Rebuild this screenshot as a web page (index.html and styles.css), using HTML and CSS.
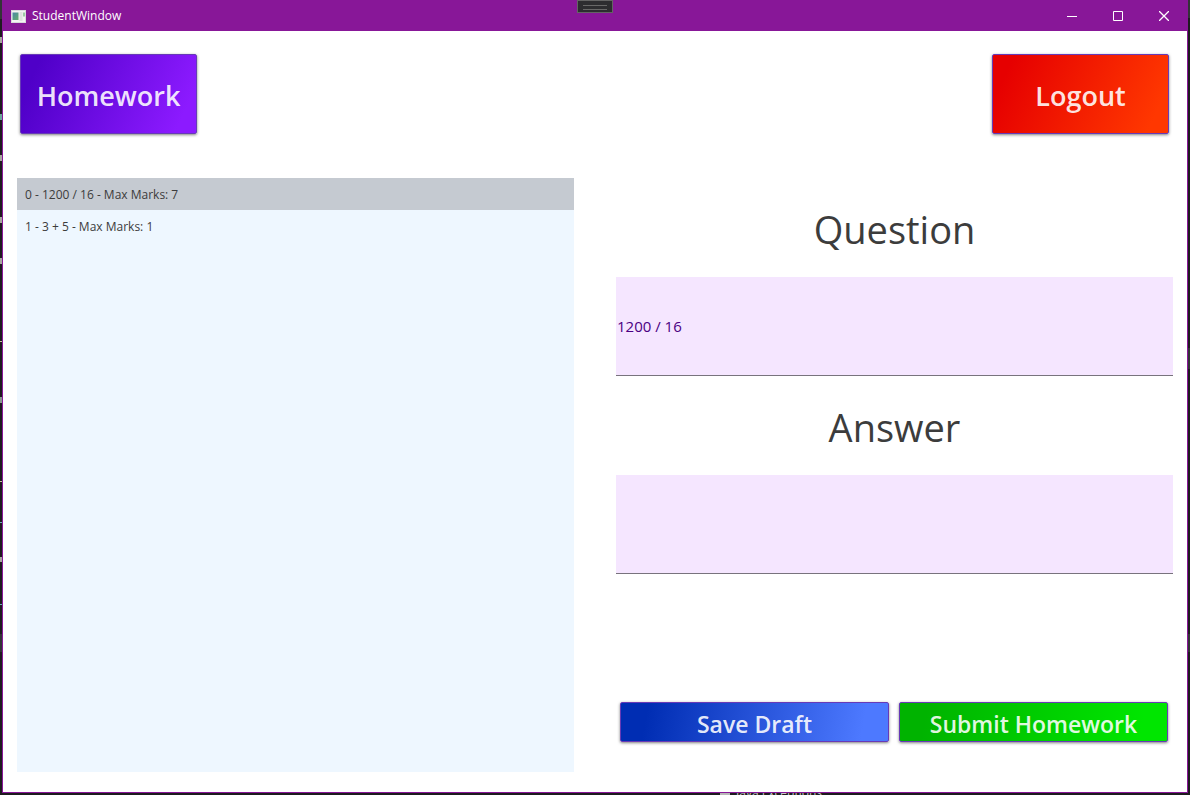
FILE: index.html
```html
<!DOCTYPE html>
<html lang="en">
<head>
<meta charset="utf-8">
<meta name="viewport" content="width=device-width, initial-scale=1">
<title>StudentWindow</title>
<link rel="stylesheet" href="styles.css">
</head>
<body class="desktop">
<div class="window">
  <header class="titlebar">
    <svg class="app-icon" width="15" height="13" viewBox="0 0 15 13" aria-hidden="true">
      <defs>
        <linearGradient id="pane" x1="0" y1="0" x2="1" y2="1">
          <stop offset="0" stop-color="#4a86a8"/>
          <stop offset="1" stop-color="#63ad6c"/>
        </linearGradient>
      </defs>
      <rect width="15" height="13" fill="#d9d9dc"/>
      <rect x="1" y="1" width="13" height="11" fill="#f3f3f3"/>
      <rect x="1.500" y="2.500" width="6" height="7.500" fill="url(#pane)"/>
      <rect x="8.500" y="2" width="3" height="9" fill="#e0e0e0"/>
      <rect x="12" y="2.500" width="2" height="4" fill="#9cc9a4"/>
    </svg>
    <h1 class="title">StudentWindow</h1>
    <div class="captions">
      <button class="caption" type="button" aria-label="Minimize">
        <svg width="10" height="10" viewBox="0 0 10 10"><path d="M0 5.500H10" class="stroke"/></svg>
      </button>
      <button class="caption" type="button" aria-label="Maximize">
        <svg width="10" height="10" viewBox="0 0 10 10"><path d="M.5.5H9.500V9.500H.5Z" class="stroke"/></svg>
      </button>
      <button class="caption" type="button" aria-label="Close">
        <svg width="10" height="10" viewBox="0 0 10 10"><path d="M0 0L10 10M10 0L0 10" class="stroke stroke-close"/></svg>
      </button>
    </div>
    <div class="debug-handle"></div>
  </header>
  <main class="content">
    <nav class="toolbar">
      <button class="btn btn-large homework" type="button">Homework</button>
      <button class="btn btn-large logout" type="button">Logout</button>
    </nav>
    <div class="columns">
      <ul class="list">
        <li class="item selected">0 - 1200 / 16 - Max Marks: 7</li>
        <li class="item">1 - 3 + 5 - Max Marks: 1</li>
      </ul>
      <form class="form">
        <label class="label" for="question">Question</label>
        <input class="field" id="question" type="text" value="1200 / 16" readonly>
        <label class="label" for="answer">Answer</label>
        <input class="field" id="answer" type="text">
        <div class="actions">
          <button class="btn save" type="button">Save Draft</button>
          <button class="btn submit" type="button">Submit Homework</button>
        </div>
      </form>
    </div>
  </main>
</div>
<div class="behind"><span class="behind-box"></span><span class="behind-text">Java Exceptions</span></div>
</body>
</html>
```
FILE: styles.css
```css
* {
  box-sizing: border-box;
}

.desktop {
  display: flex;
  flex-direction: column;
  min-height: 100vh;
  margin: 0;
  padding: 0 2px;
  background:
    linear-gradient(#333337 18px, transparent 18px 348px, #333337 348px 369px, transparent 369px 634px, #333337 634px 652px, transparent 652px) right top / 2px 100% no-repeat,
    linear-gradient(#333337 19px, transparent 19px 37px, #a8a8a0 37px 43px, transparent 43px 114px, #6aa89c 114px 120px, transparent 120px 155px, #a8a8a0 155px 161px, transparent 161px 217px, #a8a8a0 217px 223px, transparent 223px 258px, #a8a8a0 258px 264px, transparent 264px 341px, #c8c8a0 341px 342px, transparent 342px 397px, #8a9a90 397px 403px, transparent 403px 481px, #c8c8a0 481px 482px, transparent 482px 522px, #6ab0b8 522px 523px, transparent 523px 557px, #a8a8a0 557px 562px, transparent 562px 604px, #6ab0b8 604px 605px, transparent 605px 634px, #333337 634px 652px, transparent 652px) left top / 2px 100% no-repeat,
    #1e1b1f;
  font-family: "Open Sans", "Noto Sans", sans-serif;
  font-size: 12px;
  color: #3c3c3c;
}

.window {
  flex: 1;
  display: flex;
  flex-direction: column;
  border: 1px solid #881798;
  background: #fff;
}

.titlebar {
  position: relative;
  display: flex;
  align-items: center;
  height: 30px;
  padding-left: 8px;
  background: #881798;
  color: #fff;
}

.title {
  flex: 1;
  margin: 0 0 0 6px;
  padding-bottom: 2px;
  font-size: 12px;
  font-weight: 400;
}

.captions {
  display: flex;
}

.caption {
  display: grid;
  place-items: center;
  width: 46px;
  height: 28px;
  padding: 0;
  border: 0;
  background: none;
}

.stroke {
  fill: none;
  stroke: #fff;
}

.stroke-close {
  stroke-width: 1.3;
}

.debug-handle {
  position: absolute;
  top: -1px;
  left: 50%;
  width: 36px;
  height: 13px;
  margin-left: -18px;
  padding: 4px 5px;
  border: 1px solid #646464;
  background: #2d2d30;
}

.debug-handle::before {
  content: "";
  display: block;
  height: 3px;
  border: solid #686868;
  border-width: 1px 0;
}

.content {
  flex: 1;
  display: flex;
  flex-direction: column;
  gap: 44px;
  padding: 23px 14px 20px;
}

.toolbar {
  display: flex;
  justify-content: space-between;
  padding: 0 4px 0 3px;
}

.btn {
  flex: 1;
  height: 40px;
  padding: 4px 0 0;
  border: 1px solid #673ab7;
  border-radius: 2px;
  box-shadow: 0 1px 3px rgba(0, 0, 0, 0.5);
  font-family: inherit;
  font-size: 23px;
  font-weight: 600;
  line-height: 32px;
  white-space: nowrap;
  color: rgba(255, 255, 255, 0.9);
}

.btn-large {
  flex: 0 0 177px;
  height: 80px;
  font-size: 27px;
}

.homework {
  background: linear-gradient(115deg, #4f00c8 10%, #8c1aff 90%);
}

.logout {
  background: linear-gradient(115deg, #e60000 10%, #ff3700 90%);
}

.save {
  background: linear-gradient(100deg, #002db3 10%, #4d79ff 90%);
}

.submit {
  background: linear-gradient(100deg, #00b300 10%, #00e600 90%);
}

.columns {
  flex: 1;
  display: grid;
  grid-template-columns: 1fr 1fr;
  gap: 42px;
}

.list {
  margin: 0;
  padding: 0;
  list-style: none;
  background: #eef7ff;
}

.item {
  height: 32px;
  padding: 0 8px;
  line-height: 33px;
}

.selected {
  background: #c5cad1;
}

.form {
  display: flex;
  flex-direction: column;
  padding-bottom: 30px;
}

.label {
  height: 99px;
  padding-top: 25px;
  font-size: 38px;
  line-height: 52px;
  text-align: center;
}

.field {
  width: 100%;
  height: 99px;
  padding: 0 1px;
  border: 0;
  border-bottom: 1px solid #78737d;
  border-radius: 0;
  outline: 0;
  background: #f5e6ff;
  font-family: inherit;
  font-size: 15px;
  color: #4b0082;
}

.actions {
  display: flex;
  gap: 10px;
  margin-top: auto;
  padding: 0 5px 0 4px;
}

.behind {
  display: flex;
  align-items: flex-start;
  gap: 6px;
  height: 2px;
  padding-left: 718px;
  overflow: hidden;
}

.behind-box {
  width: 10px;
  height: 2px;
  background: #b8b8b8;
}

.behind-text {
  margin-top: -8px;
  font-size: 12px;
  line-height: 16px;
  color: #c8c8c8;
}
```
